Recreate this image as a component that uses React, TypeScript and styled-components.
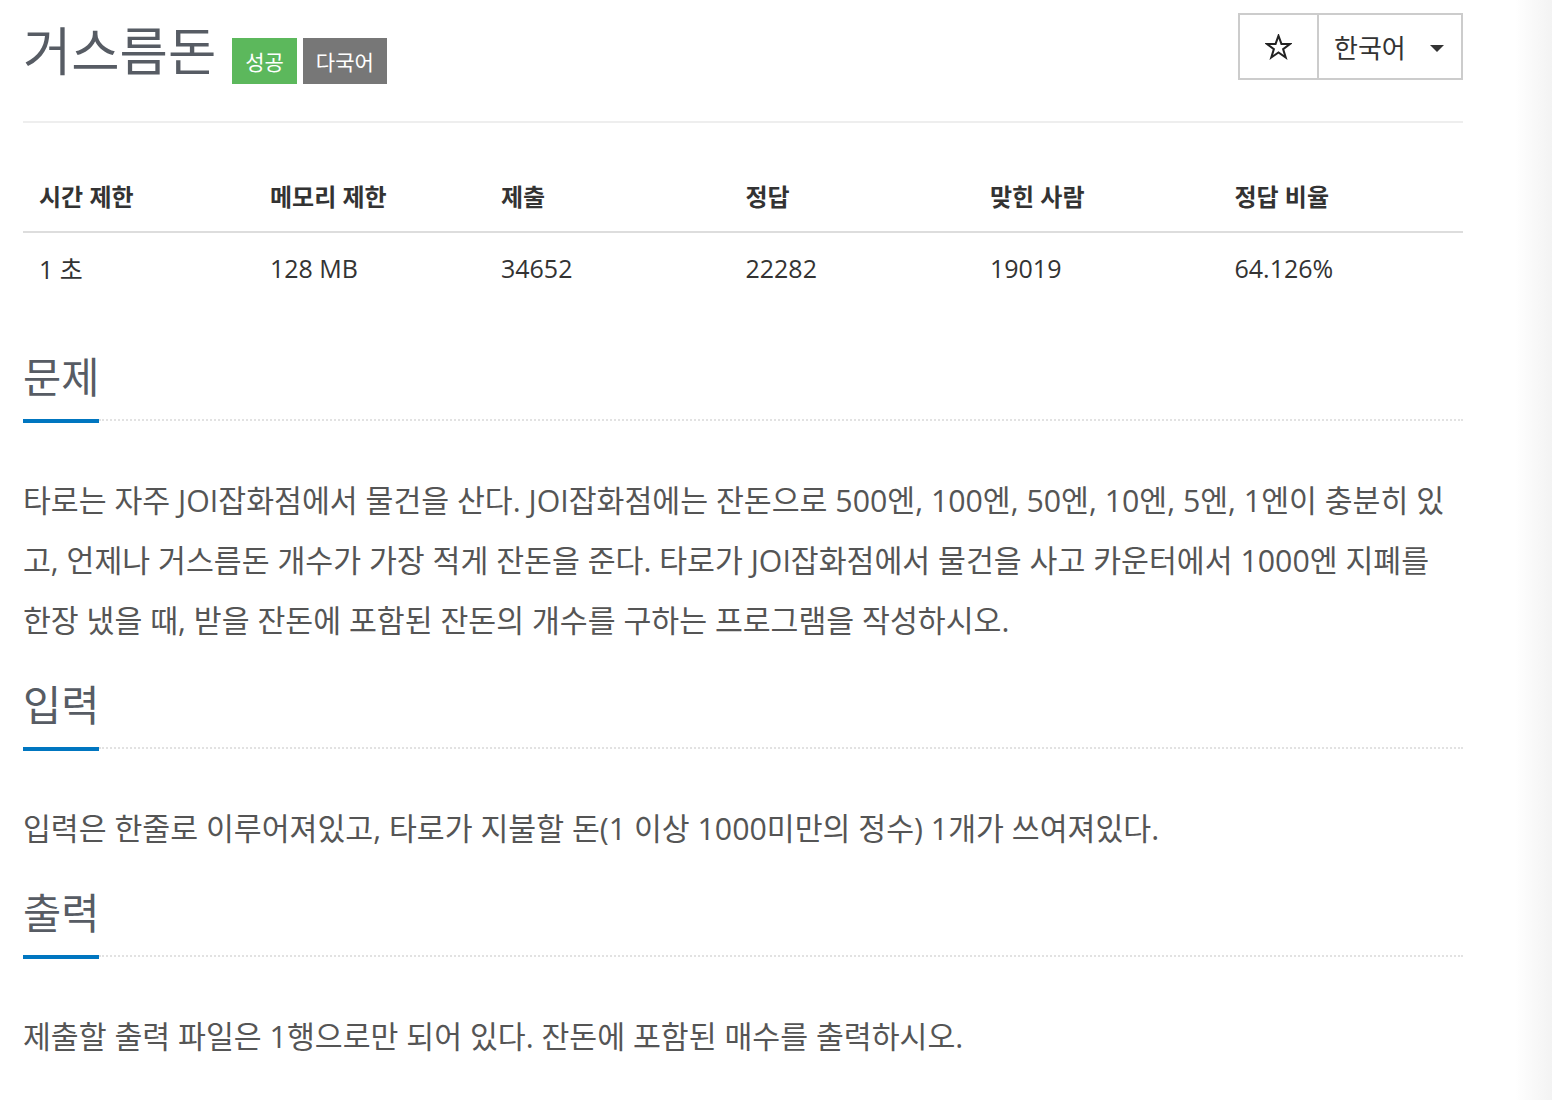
import React from "react";
import styled, { createGlobalStyle } from "styled-components";

const GlobalStyle = createGlobalStyle`
  html, body {
    margin: 0;
    padding: 0;
  }
  body {
    background: linear-gradient(to right, #ffffff 1515px, #f3f3f3 1552px);
    font-family: "Open Sans", "Noto Sans CJK KR", sans-serif;
    color: #333;
    min-height: 1100px;
  }
`;

const Page = styled.div`
  width: 1440px;
  padding-left: 23px;
`;

const Header = styled.header`
  display: flex;
  justify-content: space-between;
  align-items: flex-start;
  height: 121px;
  border-bottom: 2px solid #eeeeee;
`;

const TitleWrap = styled.div`
  display: flex;
  align-items: flex-start;
`;

const Title = styled.h1`
  margin: 15px 16px 0 0;
  font-family: "Noto Sans CJK KR", sans-serif;
  font-weight: 400;
  font-size: 52.5px;
  line-height: 66px;
  color: #575c64;
  letter-spacing: 0;
`;

const Badge = styled.span<{ $tone: "success" | "muted" }>`
  margin-top: 38px;
  margin-right: 6px;
  height: 46px;
  padding: 0 13px;
  display: inline-flex;
  align-items: center;
  font-family: "Noto Sans CJK KR", sans-serif;
  font-size: 21px;
  color: #fff;
  background: ${(p) => (p.$tone === "success" ? "#5cb85c" : "#777777")};
`;

const BtnGroup = styled.div`
  margin-top: 13px;
  display: flex;
  height: 67px;
  border: 2px solid #cccccc;
  box-sizing: border-box;
`;

const StarBtn = styled.div`
  width: 77px;
  display: flex;
  align-items: center;
  justify-content: center;
  border-right: 2px solid #cccccc;
  color: #222;
`;

const LangBtn = styled.div`
  width: 142px;
  display: flex;
  align-items: center;
  box-sizing: border-box;
  padding-left: 15px;
  font-family: "Noto Sans CJK KR", sans-serif;
  font-size: 26px;
  color: #333;
`;

const Caret = styled.span`
  margin-left: 24px;
  margin-top: 4px;
  width: 0;
  height: 0;
  border-left: 7.5px solid transparent;
  border-right: 7.5px solid transparent;
  border-top: 7.5px solid #333;
`;

const Table = styled.table`
  width: 100%;
  margin-top: 36px;
  border-collapse: collapse;
  table-layout: fixed;
`;

const Th = styled.th<{ $w: string }>`
  width: ${(p) => p.$w};
  text-align: left;
  padding: 0 0 0 16px;
  height: 72px;
  font-family: "Open Sans", "Noto Sans CJK KR", sans-serif;
  font-weight: 700;
  font-size: 24px;
  color: #333;
  border-bottom: 2px solid #dddddd;
  vertical-align: middle;
`;

const Td = styled.td`
  padding: 0 0 0 16px;
  height: 70px;
  font-family: "Open Sans", "Noto Sans CJK KR", sans-serif;
  font-size: 25px;
  color: #333;
  vertical-align: middle;
`;

const Section = styled.section`
  margin-top: 46px;
  & + & {
    margin-top: 0;
  }
`;

const Headline = styled.div`
  display: flex;
  align-items: flex-end;
  margin-bottom: 48px;
`;

const H2 = styled.h2`
  margin: 0;
  padding-bottom: 18px;
  font-family: "Noto Sans CJK KR", sans-serif;
  font-weight: 400;
  font-size: 41.5px;
  line-height: 52px;
  color: #575c64;
  border-bottom: 4px solid #0076c0;
`;

const Rule = styled.div`
  flex: 1;
  margin-bottom: 2px;
  border-bottom: 2px dotted #e2e2e2;
`;

const Para = styled.p`
  margin: 0 0 26px;
  font-family: "Open Sans", "Noto Sans CJK KR", sans-serif;
  font-size: 30.3px;
  line-height: 60px;
  color: #555555;
`;

const StarIcon = () => (
  <svg width="27" height="26" viewBox="0 0 24 23" fill="none" stroke="#222" strokeWidth="1.8" strokeLinejoin="miter">
    <path d="M12 1.5l2.6 7.3h7.6l-6.1 4.6 2.3 7.4L12 16.3l-6.4 4.5 2.3-7.4L1.8 8.8h7.6z" />
  </svg>
);

const cols = [
  ["시간 제한", "1 초", "16%"],
  ["메모리 제한", "128 MB", "16%"],
  ["제출", "34652", "17%"],
  ["정답", "22282", "17%"],
  ["맞힌 사람", "19019", "17%"],
  ["정답 비율", "64.126%", "17%"],
];

const sections = [
  {
    title: "문제",
    text: "타로는 자주 JOI잡화점에서 물건을 산다. JOI잡화점에는 잔돈으로 500엔, 100엔, 50엔, 10엔, 5엔, 1엔이 충분히 있고, 언제나 거스름돈 개수가 가장 적게 잔돈을 준다. 타로가 JOI잡화점에서 물건을 사고 카운터에서 1000엔 지폐를 한장 냈을 때, 받을 잔돈에 포함된 잔돈의 개수를 구하는 프로그램을 작성하시오.",
  },
  {
    title: "입력",
    text: "입력은 한줄로 이루어져있고, 타로가 지불할 돈(1 이상 1000미만의 정수) 1개가 쓰여져있다.",
  },
  {
    title: "출력",
    text: "제출할 출력 파일은 1행으로만 되어 있다. 잔돈에 포함된 매수를 출력하시오.",
  },
];

export default function App() {
  return (
    <>
      <GlobalStyle />
      <Page>
        <Header>
          <TitleWrap>
            <Title>거스름돈</Title>
            <Badge $tone="success">성공</Badge>
            <Badge $tone="muted">다국어</Badge>
          </TitleWrap>
          <BtnGroup>
            <StarBtn>
              <StarIcon />
            </StarBtn>
            <LangBtn>
              한국어
              <Caret />
            </LangBtn>
          </BtnGroup>
        </Header>
        <Table>
          <thead>
            <tr>
              {cols.map((c) => (
                <Th key={c[0]} $w={c[2]}>
                  {c[0]}
                </Th>
              ))}
            </tr>
          </thead>
          <tbody>
            <tr>
              {cols.map((c) => (
                <Td key={c[0]}>{c[1]}</Td>
              ))}
            </tr>
          </tbody>
        </Table>
        {sections.map((s) => (
          <Section key={s.title}>
            <Headline>
              <H2>{s.title}</H2>
              <Rule />
            </Headline>
            <Para>{s.text}</Para>
          </Section>
        ))}
      </Page>
    </>
  );
}
